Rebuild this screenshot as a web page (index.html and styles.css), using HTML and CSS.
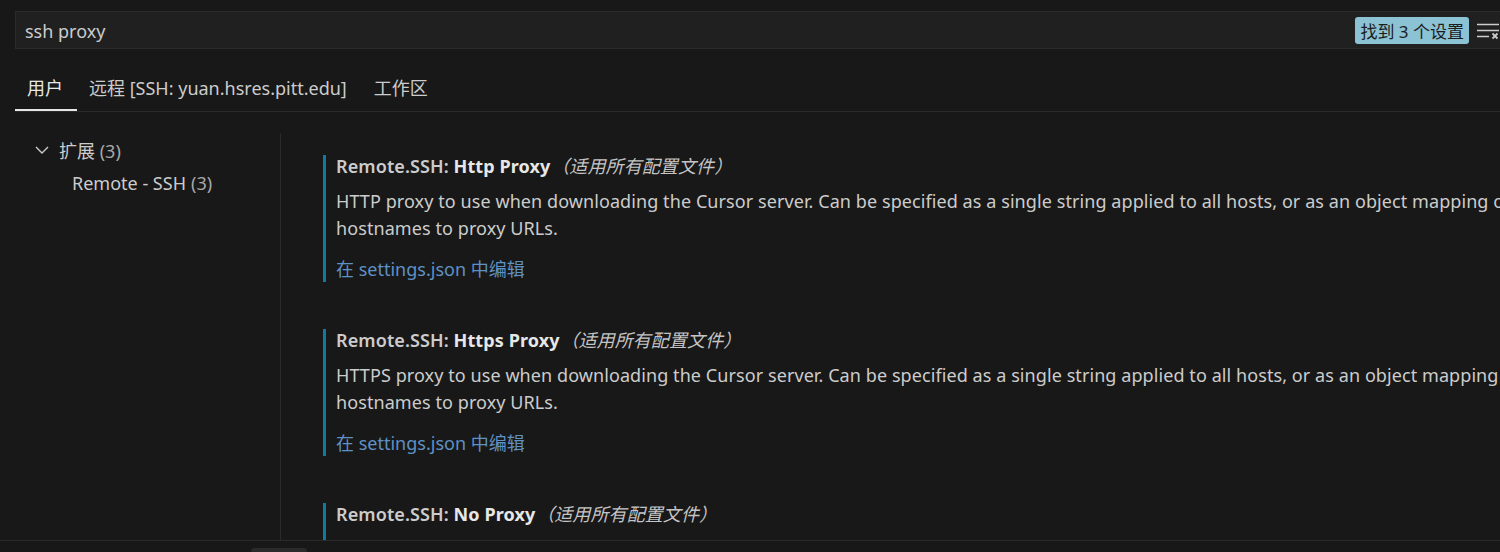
FILE: index.html
```html
<!DOCTYPE html>
<html lang="zh-CN">
<head>
    <meta charset="UTF-8">
    <title>设置</title>
    <link rel="stylesheet" href="styles.css">
</head>
<body>

<div class="search">
    <span class="search-text">ssh proxy</span>
    <span class="badge">找到 3 个设置</span>
    <svg class="clear-icon" width="26" height="22" viewBox="0 0 26 22">
        <path d="M1 4.5h22M1 10.5h22M1 16.5h12" stroke="#cccccc" stroke-width="1.6" fill="none"/>
        <path d="M16.5 13.5l5 5M21.5 13.5l-5 5" stroke="#cccccc" stroke-width="1.8" fill="none"/>
    </svg>
</div>

<div class="tabs">
    <div class="tab active">用户</div>
    <div class="tab">远程 [SSH: yuan.hsres.pitt.edu]</div>
    <div class="tab">工作区</div>
</div>

<div class="content">
    <div class="tree">
        <div class="tree-row">
            <svg class="chevron" width="16" height="16" viewBox="0 0 16 16">
                <path d="M2 5l6 6 6-6" stroke="#cccccc" stroke-width="1.4" fill="none"/>
            </svg>
            <span>扩展 <span class="count">(3)</span></span>
        </div>
        <div class="tree-row child">Remote - SSH <span class="count">(3)</span></div>
    </div>

    <div class="settings">
        <div class="setting">
            <div class="setting-title">
                <span class="category">Remote.SSH: </span><span class="label">Http Proxy</span>
                <span class="scope">（适用所有配置文件）</span>
            </div>
            <div class="setting-desc">HTTP proxy to use when downloading the Cursor server. Can be specified as a single string applied to all hosts, or as an object mapping of hostnames to proxy URLs.</div>
            <a class="setting-link" href="#">在 settings.json 中编辑</a>
        </div>

        <div class="setting">
            <div class="setting-title">
                <span class="category">Remote.SSH: </span><span class="label">Https Proxy</span>
                <span class="scope">（适用所有配置文件）</span>
            </div>
            <div class="setting-desc">HTTPS proxy to use when downloading the Cursor server. Can be specified as a single string applied to all hosts, or as an object mapping of hostnames to proxy URLs.</div>
            <a class="setting-link" href="#">在 settings.json 中编辑</a>
        </div>

        <div class="setting last">
            <div class="setting-title">
                <span class="category">Remote.SSH: </span><span class="label">No Proxy</span>
                <span class="scope">（适用所有配置文件）</span>
            </div>
        </div>
    </div>
</div>

<div class="footer">
    <div class="pill"></div>
</div>

</body>
</html>
```

FILE: styles.css
```css
body {
    margin: 0;
    width: 1500px;
    height: 552px;
    overflow: hidden;
    background-color: #181818;
    color: #cccccc;
    font-family: "Noto Sans", "Noto Sans CJK SC", sans-serif;
    font-size: 18px;
}
.search {
    display: flex;
    align-items: center;
    box-sizing: border-box;
    width: 1500px;
    height: 38px;
    margin: 11px 0 0 15px;
    padding: 1px 12px 0 9px;
    background-color: #202020;
    border: 1px solid #2b2b2b;
    font-size: 18px;
}
.search-text {
    flex: 1;
    color: #cccccc;
}
.badge {
    display: flex;
    align-items: center;
    height: 27px;
    padding: 0 5px;
    border-radius: 3px;
    background-color: #8bc3d4;
    color: #1c1c1c;
    font-size: 17px;
}
.clear-icon {
    margin-left: 7px;
    flex-shrink: 0;
}
.tabs {
    display: flex;
    margin: 26px 0 0 15px;
    border-bottom: 1px solid #2b2b2b;
}
.tab {
    height: 36px;
    line-height: 27px;
    padding: 0 15px 0 12px;
    font-size: 18px;
    color: #cccccc;
}
.tab.active {
    padding: 0 14px 0 12px;
    color: #e7e7e7;
    border-bottom: 2px solid #e7e7e7;
    height: 34px;
}
.content {
    display: flex;
    height: 407px;
    margin-top: 21px;
    overflow: hidden;
}
.tree {
    flex-shrink: 0;
    width: 265px;
    margin-left: 15px;
    border-right: 1px solid #2b2b2b;
}
.tree-row {
    display: flex;
    align-items: center;
    gap: 9px;
    height: 33px;
    padding-left: 19px;
    color: #cccccc;
}
.tree-row.child {
    padding-left: 57px;
    gap: 5px;
}
.count {
    color: #a8a8a8;
}
.settings {
    flex-shrink: 0;
    padding: 22px 0 0 42px;
}
.setting {
    width: 1250px;
    padding-left: 10px;
    border-left: 3px solid #0f7ba0;
    margin-bottom: 47px;
}
.setting.last {
    height: 60px;
}
.setting-title {
    line-height: 23px;
    margin-bottom: 10px;
    font-size: 18px;
    letter-spacing: 0.1px;
}
.category {
    font-weight: 600;
    color: #cccccc;
}
.label {
    font-weight: 700;
    color: #e7e7e7;
}
.scope {
    font-style: italic;
    color: #c4c4c4;
    margin-left: -4px;
}
.setting-desc {
    line-height: 27px;
    color: #cccccc;
    letter-spacing: 0.08px;
}
.setting-link {
    display: block;
    margin-top: 15px;
    line-height: 25px;
    color: #5f91c4;
    text-decoration: none;
}
.footer {
    height: 12px;
    border-top: 1px solid #2b2b2b;
}
.pill {
    width: 56px;
    height: 8px;
    margin: 7px 0 0 251px;
    border-radius: 4px;
    background-color: #2b2b2b;
}
```
